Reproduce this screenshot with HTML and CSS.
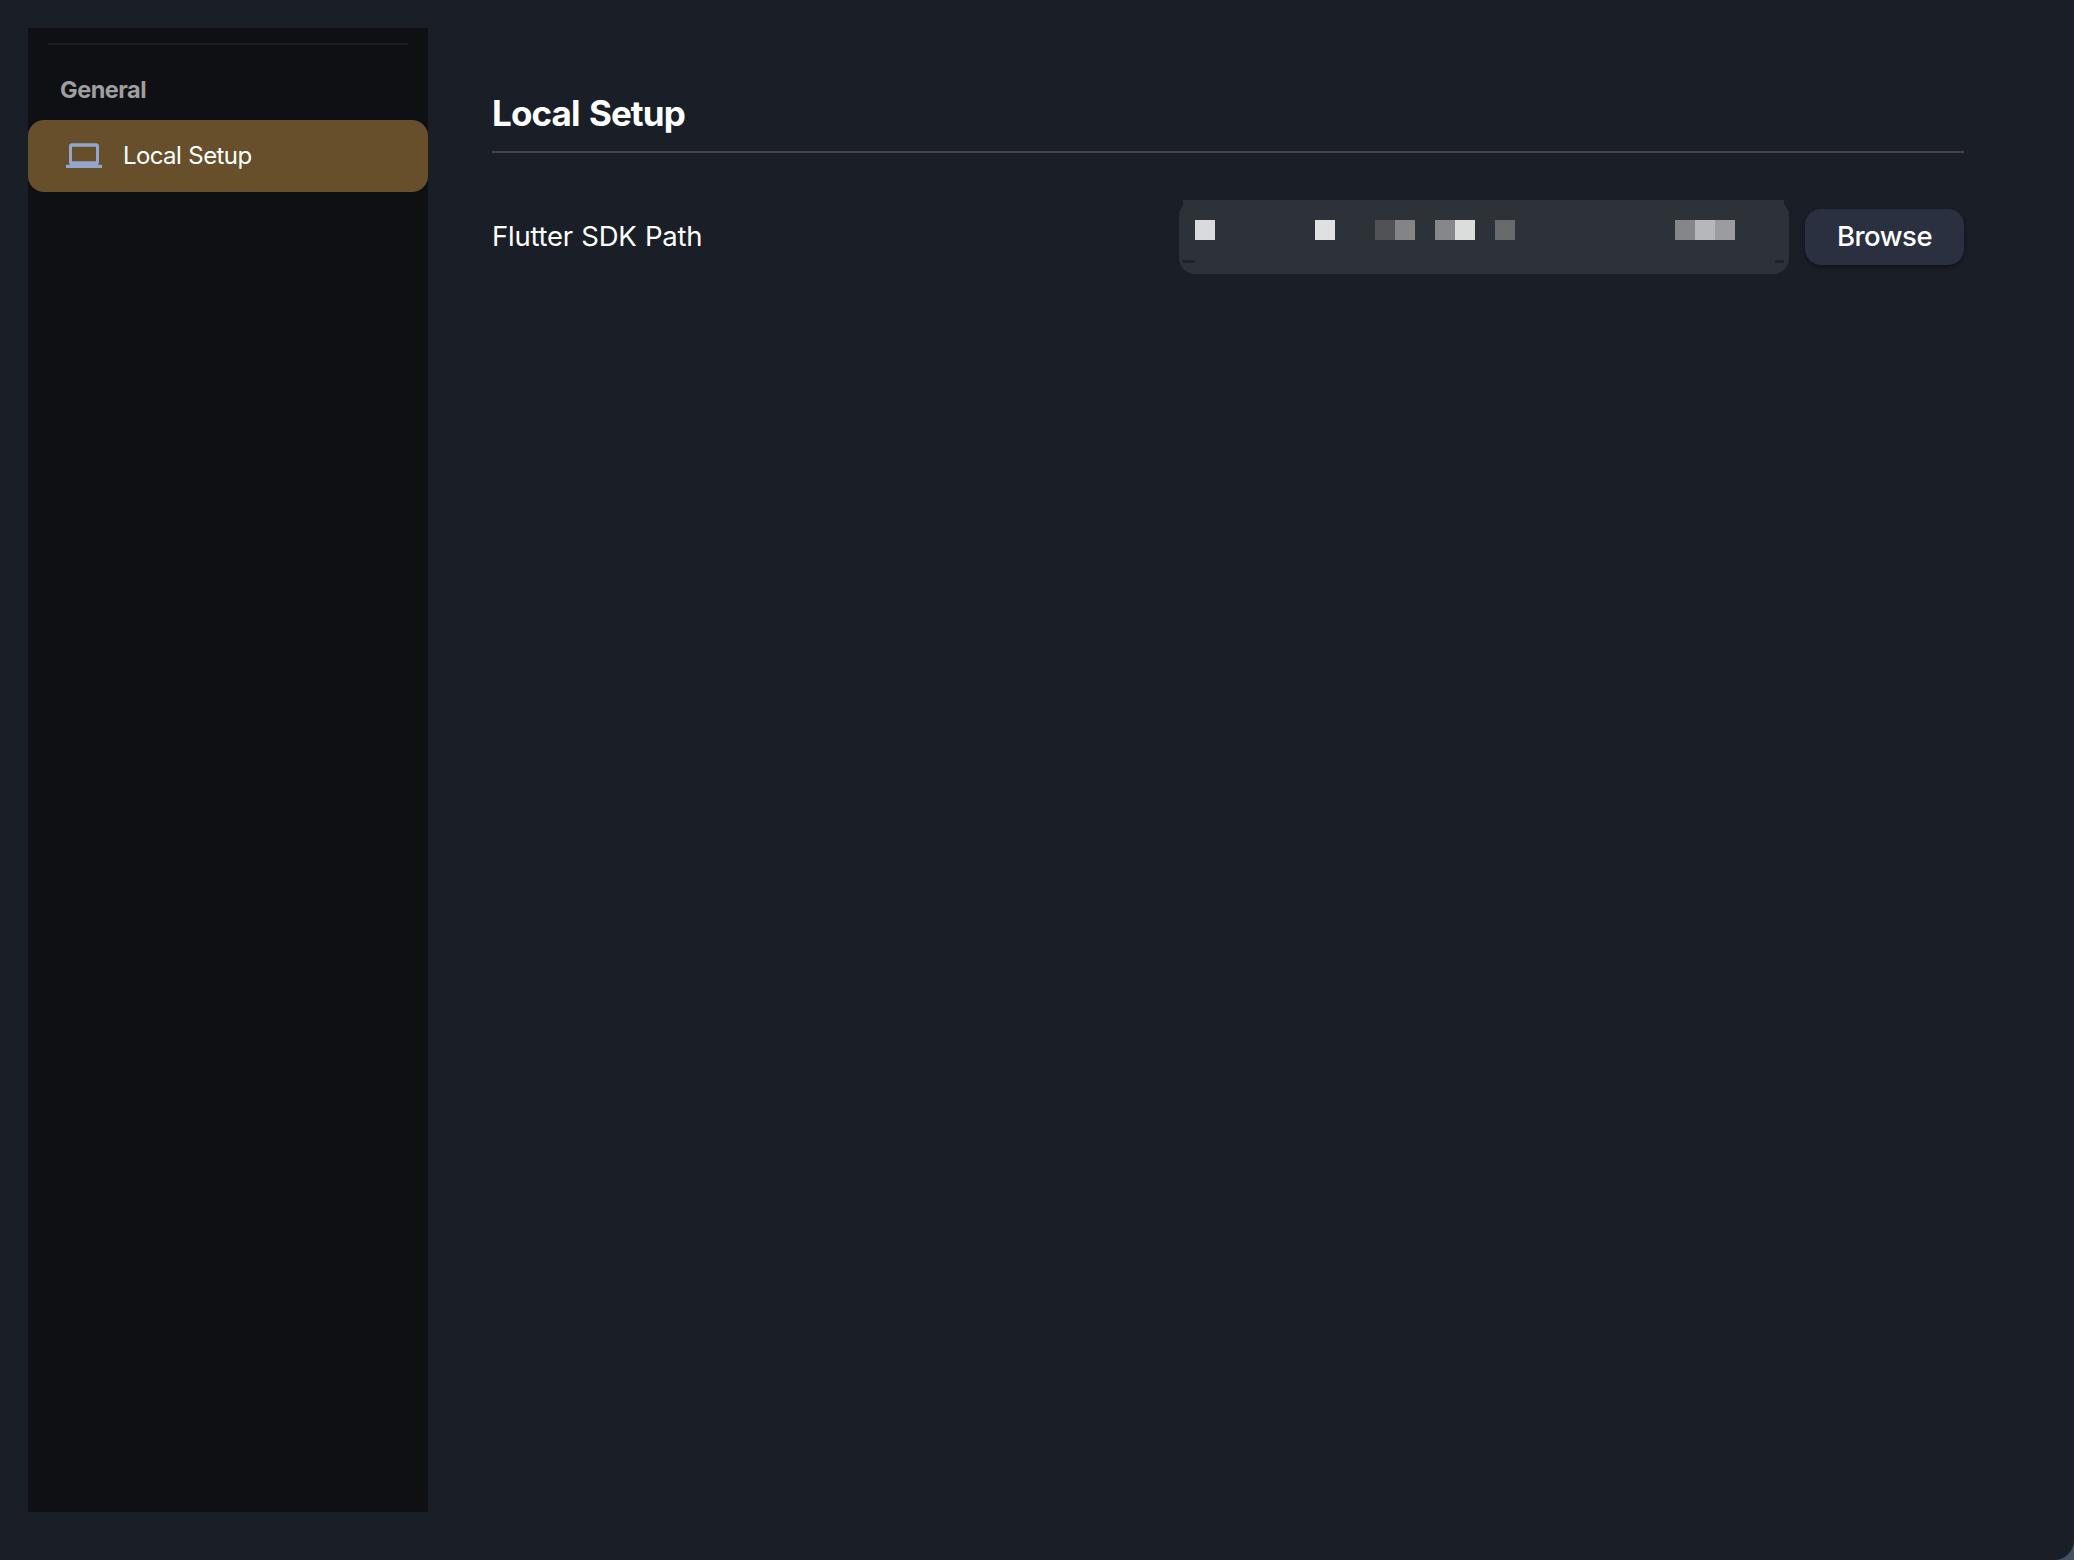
FILE: index.html
```html
<!DOCTYPE html>
<html lang="en">
<head>
<meta charset="utf-8">
<title>Local Setup</title>
<link rel="stylesheet" href="styles.css">
</head>
<body>
<div class="window">
  <nav class="sidebar">
    <hr class="sidebar-divider">
    <h2 class="sidebar-heading">General</h2>
    <a class="nav-item">
      <svg class="nav-icon" viewBox="0 0 36 36"><path fill-rule="evenodd" d="M6 5.300h24a3 3 0 0 1 3 3V24a3 3 0 0 1-1.200 2.700H36V30H0v-3.300h4.200A3 3 0 0 1 3 24V8.300a3 3 0 0 1 3-3zM6 8.700V23.300H30V8.700z"/></svg>
      <span class="nav-label">Local Setup</span>
    </a>
  </nav>
  <main class="content">
    <h1 class="title">Local Setup</h1>
    <div class="setting">
      <span class="setting-label">Flutter SDK Path</span>
      <div class="path-field">
        <div class="mask">
          <i class="cell c1"></i><i class="cell c2"></i><i class="cell c3"></i><i class="cell c4"></i><i class="cell c5"></i><i class="cell c6"></i><i class="cell c7"></i><i class="cell c8"></i><i class="cell c9"></i><i class="cell c10"></i>
        </div>
      </div>
      <button class="browse">Browse</button>
    </div>
  </main>
</div>
</body>
</html>
```
FILE: styles.css
```css
* { box-sizing: border-box; }
body {
  margin: 0;
  background: #475060;
  font-family: Inter, "Liberation Sans", sans-serif;
  color: #fff;
}
.window {
  display: flex;
  gap: 64px;
  height: 1560px;
  padding: 28px 110px 48px 28px;
  background: #1a1e26;
  border-radius: 0 0 20px 0;
  overflow: hidden;
}
.sidebar {
  width: 400px;
  padding-top: 15px;
  background: #0f1014;
}
.sidebar-divider {
  height: 2px;
  margin: 0 20px;
  border: 0;
  background: #1c1d21;
}
.sidebar-heading {
  margin: 0;
  height: 75px;
  padding: 29px 0 0 32px;
  font-size: 23.5px;
  line-height: 32px;
  font-weight: 700;
  letter-spacing: -0.5px;
  color: #9f9f9f;
}
.nav-item {
  display: flex;
  align-items: center;
  gap: 21px;
  height: 72px;
  padding-left: 38px;
  border-radius: 16px;
  background: #674f2b;
}
.nav-icon {
  width: 36px;
  height: 36px;
  fill: #94a6cc;
}
.nav-label {
  padding-bottom: 1px;
  font-size: 24px;
  letter-spacing: -0.6px;
  word-spacing: 1px;
}
.content { flex: 1; }
.title {
  margin: 0;
  height: 125px;
  padding-top: 61px;
  border-bottom: 2px solid #454547;
  font-size: 35px;
  line-height: 48px;
  font-weight: 700;
  letter-spacing: -0.9px;
  word-spacing: 2px;
}
.setting {
  display: flex;
  align-items: center;
  height: 74px;
  margin-top: 47px;
}
.setting-label {
  flex: 1;
  padding-bottom: 2px;
  font-size: 27.5px;
  letter-spacing: -0.25px;
  word-spacing: 1px;
}
.path-field {
  position: relative;
  width: 610px;
  height: 74px;
  margin-right: 16px;
  padding: 20px 16px;
  border-radius: 16px;
  background:
    linear-gradient(#1e2229, #1e2229) 4px 60px / 12px 3px no-repeat,
    linear-gradient(#1e2229, #1e2229) 596px 60px / 9px 3px no-repeat,
    #2d3138;
}
/* Squared-off top edge of the field */
.path-field::before {
  content: "";
  position: absolute;
  left: 4px;
  right: 5px;
  top: 0;
  height: 20px;
  background: #2d3138;
}
.mask {
  display: grid;
  grid-template-columns: repeat(27, 20px);
  height: 20px;
}
.cell { grid-row: 1; }
.c1 { grid-column: 1; background: #d8dadc; }
.c2 { grid-column: 7; background: #dfe0e0; }
.c3 { grid-column: 10; background: #515256; }
.c4 { grid-column: 11; background: #838486; }
.c5 { grid-column: 13; background: #868788; }
.c6 { grid-column: 14; background: #dbdcdc; }
.c7 { grid-column: 16; background: #696a6d; }
.c8 { grid-column: 25; background: #84868a; }
.c9 { grid-column: 26; background: #b6b7b9; }
.c10 { grid-column: 27; background: #9b9c9f; }
.browse {
  width: 159px;
  height: 56px;
  padding: 0 0 2px;
  border: 0;
  border-radius: 16px;
  background: #2a3040;
  box-shadow: 0 2px 4px rgba(0, 0, 0, 0.4);
  color: #fff;
  font-family: inherit;
  font-size: 27.5px;
  font-weight: 500;
  letter-spacing: -0.5px;
}
```
